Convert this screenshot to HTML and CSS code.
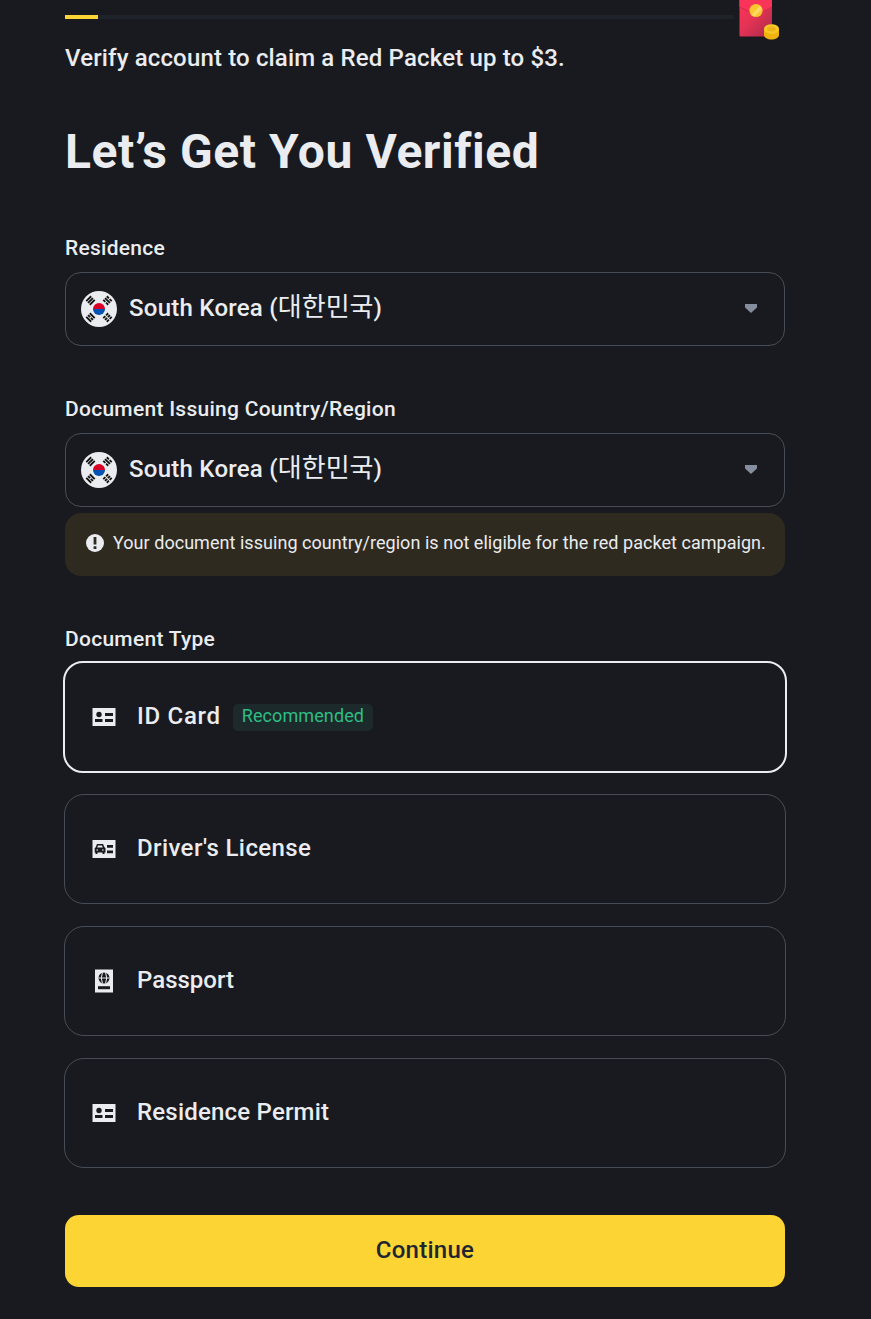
FILE: index.html
```html
<!DOCTYPE html>
<html lang="en">
<head>
<meta charset="UTF-8">
<meta name="viewport" content="width=device-width, initial-scale=1.0">
<title>Identity Verification</title>
<link rel="stylesheet" href="styles.css">
</head>
<body>
<!-- shared icons -->
<svg class="sprite" width="0" height="0">
    <symbol id="flag-kr" viewBox="0 0 36 36">
        <circle cx="18" cy="18" r="18" fill="#eaecef"/>
        <path d="M12 18a6 6 0 0 1 12 0z" fill="#d80027"/>
        <path d="M12 18a6 6 0 0 0 12 0z" fill="#0052b4"/>
        <g stroke="#111" stroke-width="1.8">
            <path transform="translate(9.500 9.500) rotate(-45)" d="M-3.500-2.500h7M-3.500 0h7M-3.500 2.500h7"/>
            <path transform="translate(26.500 9.500) rotate(45)" d="M-3.500-2.500h3M.5-2.500h3M-3.500 0h7M-3.500 2.500h3M.5 2.500h3"/>
            <path transform="translate(9.500 26.500) rotate(45)" d="M-3.500-2.500h7M-3.500 0h3M.5 0h3M-3.500 2.500h7"/>
            <path transform="translate(26.500 26.500) rotate(-45)" d="M-3.500-2.500h3M.5-2.500h3M-3.500 0h3M.5 0h3M-3.500 2.500h3M.5 2.500h3"/>
        </g>
    </symbol>
    <symbol id="id-card" viewBox="0 0 24 24">
        <path d="M0.5 3h23v18H0.5z" fill="#eaecef"/>
        <g fill="#181a20">
            <circle cx="7" cy="9.500" r="2.700"/>
            <path d="M13 8h8v3h-8zM3 14h7.500v3H3zM13 14h8v3h-8z"/>
        </g>
    </symbol>
</svg>

<main class="page">
    <div class="progress">
        <div class="progress-track"><div class="progress-bar"></div></div>
        <svg class="packet" width="41" height="40" viewBox="0 0 41 40">
            <defs>
                <linearGradient id="red" x1="0" y1="0" x2="1" y2="1">
                    <stop offset="0" stop-color="#ff3358"/>
                    <stop offset="0.45" stop-color="#e43355"/>
                    <stop offset="1" stop-color="#a92a48"/>
                </linearGradient>
            </defs>
            <path d="M.5 0H33v35.500a1 1 0 0 1-1 1H1.500a1 1 0 0 1-1-1z" fill="url(#red)"/>
            <path d="M.5 0H33v7l-16 8L.5 7z" fill="#f93458"/>
            <path d="M.5 7L17 15l16-8" fill="none" stroke="#ca2d4b"/>
            <circle cx="17" cy="10.500" r="6.600" fill="#fbc52d"/>
            <path d="M12.500 14.500l8.500-8.500 2 3-7.500 7.500z" fill="#fbd967"/>
            <path d="M25 29v6c0 2.500 3.500 4.500 7.500 4.500s7.500-2 7.500-4.500v-6z" fill="#efb20f"/>
            <ellipse cx="32.500" cy="29" rx="7.500" ry="4.800" fill="#f8ca27"/>
            <ellipse cx="32.500" cy="29" rx="4.500" ry="2.500" fill="#edb318"/>
        </svg>
    </div>
    <p class="intro">Verify account to claim a Red Packet up to $3.</p>
    <h1>Let’s Get You Verified</h1>

    <form>
        <div class="label label-residence">Residence</div>
        <div class="select">
            <svg width="36" height="36"><use href="#flag-kr"/></svg>
            <span class="country">South Korea (<span class="korean">대한민국</span>)</span>
            <svg class="arrow" width="12" height="9" viewBox="0 0 12 9"><path d="M0 0h12v3.500L6 9 0 3.500z" fill="#848e9c"/></svg>
        </div>

        <div class="label label-country">Document Issuing Country/Region</div>
        <div class="select">
            <svg width="36" height="36"><use href="#flag-kr"/></svg>
            <span class="country">South Korea (<span class="korean">대한민국</span>)</span>
            <svg class="arrow" width="12" height="9" viewBox="0 0 12 9"><path d="M0 0h12v3.500L6 9 0 3.500z" fill="#848e9c"/></svg>
        </div>
        <div class="notice">
            <svg width="18" height="18" viewBox="0 0 18 18">
                <circle cx="9" cy="9" r="9" fill="#eaecef"/>
                <path d="M7.600 3h2.800v7.500H7.600zM7.600 12.300h2.800V15H7.600z" fill="#2f2a1f"/>
            </svg>
            <span class="notice-text">Your document issuing country/region is not eligible for the red packet campaign.</span>
        </div>

        <div class="label label-type">Document Type</div>
        <div class="options">
            <div class="option selected">
                <svg width="24" height="24"><use href="#id-card"/></svg>
                <span class="name name-id">ID Card</span>
                <span class="tag">Recommended</span>
            </div>
            <div class="option">
                <svg width="24" height="24" viewBox="0 0 24 24">
                    <path d="M0.500 3h23v18H0.500z" fill="#eaecef"/>
                    <path d="M5 7h6l1.500 3.200 1 1V15.500h-1v1.500h-2v-1.500H5.500V17h-2v-1.500H2.700v-4.300l1-1z" fill="#181a20"/>
                    <path d="M6 8.400h4l.8 2H5.200z" fill="#eaecef"/>
                    <circle cx="5.200" cy="13" r="0.800" fill="#eaecef"/>
                    <circle cx="10.900" cy="13" r="0.800" fill="#eaecef"/>
                    <path d="M15 8h6v2.700h-6zM15 13.500h6v2.700h-6z" fill="#181a20"/>
                </svg>
                <span class="name name-driver">Driver's License</span>
            </div>
            <div class="option">
                <svg width="24" height="24" viewBox="0 0 24 24">
                    <path d="M3 0.500h18v23H3z" fill="#eaecef"/>
                    <circle cx="12" cy="9" r="5.500" fill="#181a20"/>
                    <path d="M6.500 9h11M10.500 3.500Q8 9 10.500 14.500M13.500 3.500Q16 9 13.500 14.500" fill="none" stroke="#eaecef"/>
                    <path d="M6 17.200h12V20.200H6z" fill="#181a20"/>
                </svg>
                <span class="name">Passport</span>
            </div>
            <div class="option">
                <svg width="24" height="24"><use href="#id-card"/></svg>
                <span class="name name-permit">Residence Permit</span>
            </div>
        </div>

        <button type="button" class="continue">Continue</button>
    </form>
</main>
</body>
</html>
```

FILE: styles.css
```css
* {
    box-sizing: border-box;
}
body {
    margin: 0;
    background-color: #181a20;
    color: #eaecef;
    font-family: Roboto, "Noto Sans CJK KR", sans-serif;
    font-size: 24px;
    font-weight: 500;
}
svg {
    flex: none;
    display: block;
}
.sprite {
    position: absolute;
}
.page {
    width: 720px;
    margin-left: 65px;
}
.progress {
    display: flex;
    height: 40px;
    padding-right: 5px;
}
.progress-track {
    flex: 1;
    height: 4px;
    margin: 15px 5px 0 0;
    background-color: #1e2329;
}
.progress-bar {
    width: 33px;
    height: 4px;
    background-color: #fcd535;
}
.intro {
    margin: 0;
    line-height: 36px;
    letter-spacing: 0.15px;
    white-space: nowrap;
}
h1 {
    margin: 44px 0 0;
    font-size: 48px;
    line-height: 64px;
    font-weight: 700;
    letter-spacing: 0.57px;
    white-space: nowrap;
}
.label {
    height: 28px;
    font-size: 21px;
    line-height: 28px;
    letter-spacing: 0.27px;
}
.label-residence {
    margin-top: 50px;
}
.label-country {
    margin-top: 49px;
}
.label-type {
    margin-top: 49px;
}
.select {
    display: flex;
    align-items: center;
    height: 74px;
    margin-top: 10px;
    padding: 0 27px 0 15px;
    border: 1px solid #474d57;
    border-radius: 16px;
    white-space: nowrap;
}
.country {
    height: 36px;
    margin-left: 12px;
    line-height: 34px;
    letter-spacing: 0.25px;
}
.korean {
    font-size: 26px;
    font-weight: 400;
    line-height: 1;
    letter-spacing: 0;
}
.arrow {
    margin-left: auto;
    margin-bottom: 1px;
}
.notice {
    display: flex;
    align-items: center;
    gap: 9px;
    height: 63px;
    margin-top: 6px;
    padding: 0 20px 3px 21px;
    border-radius: 16px;
    background-color: #2f2a1f;
    font-size: 18px;
    font-weight: 400;
    letter-spacing: 0.04px;
    white-space: nowrap;
}
.notice-text {
    padding-bottom: 2px;
}
.options {
    display: flex;
    flex-direction: column;
    gap: 22px;
    margin: 8px -1px 0;
}
.option {
    display: flex;
    align-items: center;
    height: 110px;
    padding-left: 27px;
    border: 1px solid #474d57;
    border-radius: 20px;
}
.option svg {
    margin-right: 21px;
}
.option.selected {
    height: 112px;
    margin: 0 -1px -1px;
    border: 2px solid #eaecef;
}
.name {
    padding-bottom: 2px;
}
.name-id {
    letter-spacing: 0.7px;
}
.name-driver {
    letter-spacing: 0.4px;
}
.name-permit {
    letter-spacing: 0.2px;
}
.tag {
    height: 27px;
    margin-left: 12px;
    padding: 0 9px;
    border-radius: 5px;
    background-color: #1c2a2b;
    color: #2ebd85;
    font-size: 18px;
    font-weight: 400;
    line-height: 24px;
    letter-spacing: 0.1px;
}
.continue {
    display: block;
    width: 100%;
    height: 72px;
    margin-top: 47px;
    padding: 0 0 3px;
    border: none;
    border-radius: 14px;
    background-color: #fcd535;
    color: #202630;
    font: inherit;
    letter-spacing: 0.25px;
}
```
